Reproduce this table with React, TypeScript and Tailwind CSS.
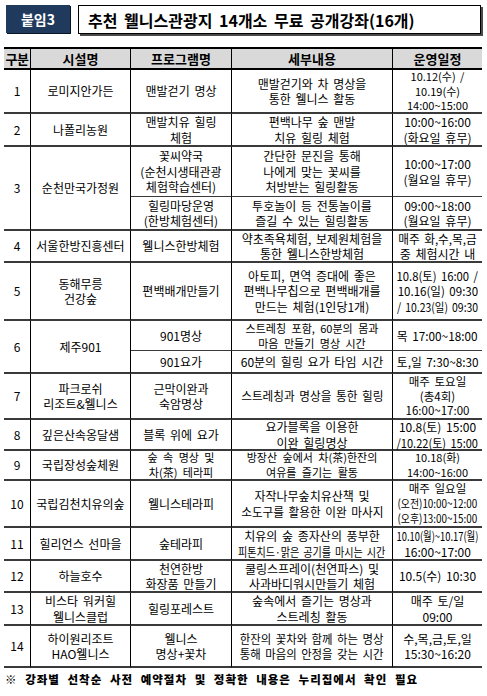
import React from "react";

type Ln = string | { t: string; s: string };

const mainB = "border-b-2 border-b-[#3a3a3a]";
const subB = "border-b border-b-[#3a3a3a]";

function Cell({
  lines,
  sub,
  last,
  span,
  lh,
  className,
}: {
  lines: Ln[];
  sub?: boolean;
  last?: boolean;
  span?: boolean;
  lh?: string;
  className?: string;
}) {
  return (
    <div
      className={`${span ? "row-span-2" : ""} ${sub ? subB : mainB} ${
        last ? "" : "border-r border-r-black"
      } flex flex-col items-center justify-center text-center ${lh ?? "text-[12px] leading-[15.5px]"} ${className ?? ""}`}
    >
      {lines.map((l, i) =>
        typeof l === "string" ? (
          <div key={i} className="whitespace-nowrap">
            {l}
          </div>
        ) : (
          <div key={i} className={`whitespace-nowrap ${l.s}`}>
            {l.t}
          </div>
        )
      )}
    </div>
  );
}

function Head({ t, last, className }: { t: string; last?: boolean; className?: string }) {
  return (
    <div
      className={`bg-[#d9d9d9] border-b-2 border-b-black ${
        last ? "" : "border-r border-r-black"
      } flex items-center justify-center font-bold text-[13px] ${className ?? ""}`}
    >
      {t}
    </div>
  );
}

const tight3 = "text-[11px] leading-[14.7px]";
const tight2 = "text-[11px] leading-[15px]";

export default function App() {
  return (
    <div className="w-[487px] h-[696px] bg-white text-black font-['Noto_Sans_CJK_KR','Noto_Sans',sans-serif] pt-[5px] overflow-hidden">
      {/* Title */}
      <div className="flex items-start pl-[6px] gap-[8px]">
        <div className="w-[64px] h-[28px] bg-[#1f3a5c] shadow-[1px_1px_0_#0b1522] flex items-center justify-center text-white font-bold text-[14px] leading-none">
          붙임3
        </div>
        <div className="w-[403px] h-[29px] border border-black shadow-[2px_2px_0_#4a4a4a] flex items-center pl-[9px] font-bold text-[16px] [word-spacing:3px] leading-none">
          추천 웰니스관광지 14개소 무료 공개강좌(16개)
        </div>
      </div>

      {/* Table */}
      <div className="ml-[4px] mt-[13px] w-[478px] border-t-2 border-t-black grid grid-cols-[27px_100px_101px_161px_89px] grid-rows-[21px_44px_33px_50px_34px_32px_58px_30px_23px_46px_31px_30px_47px_33px_32px_33px_42px] text-[12px] [word-spacing:2px]">
        <Head t="구분" className="tracking-[-0.5px] [word-spacing:0px]" />
        <Head t="시설명" />
        <Head t="프로그램명" />
        <Head t="세부내용" />
        <Head t="운영일정" last />

        {/* 1 */}
        <Cell lines={["1"]} />
        <Cell lines={["로미지안가든"]} />
        <Cell lines={["맨발걷기 명상"]} />
        <Cell lines={["맨발걷기와 차 명상을", "통한 웰니스 활동"]} />
        <Cell last lh={tight3} lines={["10.12(수) /", "10.19(수)", "14:00~15:00"]} />

        {/* 2 */}
        <Cell lines={["2"]} />
        <Cell lines={["나폴리농원"]} />
        <Cell lines={["맨발치유 힐링", "체험"]} />
        <Cell lines={["편백나무 숲 맨발", "치유 힐링 체험"]} />
        <Cell last lines={["10:00~16:00", "(화요일 휴무)"]} />

        {/* 3 */}
        <Cell span lines={["3"]} />
        <Cell span lines={["순천만국가정원"]} />
        <Cell sub lines={["꽃씨약국", "(순천시생태관광", "체험학습센터)"]} />
        <Cell sub lines={["간단한 문진을 통해", "나에게 맞는 꽃씨를", "처방받는 힐링활동"]} />
        <Cell sub last lines={["10:00~17:00", "(월요일 휴무)"]} />
        <Cell lines={["힐링마당운영", "(한방체험센터)"]} />
        <Cell lines={["투호놀이 등 전통놀이를", "즐길 수 있는 힐링활동"]} />
        <Cell last lines={["09:00~18:00", "(월요일 휴무)"]} />

        {/* 4 */}
        <Cell lines={["4"]} />
        <Cell lines={["서울한방진흥센터"]} className="[word-spacing:0px]" />
        <Cell lines={["웰니스한방체험"]} />
        <Cell lines={["약초족욕체험, 보제원체험을", "통한 웰니스한방체험"]} />
        <Cell last lines={[{ t: "매주 화,수,목,금", s: "scale-x-[0.97]" }, "중 체험시간 내"]} />

        {/* 5 */}
        <Cell lines={["5"]} />
        <Cell lines={["동해무릉", "건강숲"]} />
        <Cell lines={["편백배개만들기"]} />
        <Cell lines={["아토피, 면역 증대에 좋은", "편백나무칩으로 편백배개를", "만드는 체험(1인당1개)"]} />
        <Cell
          last
          lines={[
            { t: "10.8(토) 16:00 /", s: "scale-x-[0.94]" },
            { t: "10.16(일) 09:30", s: "scale-x-[0.96]" },
            { t: "/ 10.23(일) 09:30", s: "scale-x-[0.87]" },
          ]}
        />

        {/* 6 */}
        <Cell span lines={["6"]} />
        <Cell span lines={["제주901"]} />
        <Cell sub lines={["901명상"]} />
        <Cell
          sub
          lh={tight2}
          className="[word-spacing:3px]"
          lines={["스트레칭 포함, 60분의 몸과", "마음 만들기 명상 시간"]}
        />
        <Cell sub last lines={[{ t: "목 17:00~18:00", s: "scale-x-[0.98]" }]} />
        <Cell lines={["901요가"]} />
        <Cell lines={["60분의 힐링 요가 타임 시간"]} />
        <Cell last lines={[{ t: "토,일 7:30~8:30", s: "scale-x-[0.98]" }]} />

        {/* 7 */}
        <Cell lines={["7"]} />
        <Cell lines={["파크로쉬", "리조트&웰니스"]} />
        <Cell lines={["근막이완과", "숙암명상"]} />
        <Cell lines={[{ t: "스트레칭과 명상을 통한 힐링", s: "scale-x-[0.97]" }]} />
        <Cell last lh="text-[11.5px] leading-[14.8px]" lines={["매주 토요일", "(총4회)", "16:00~17:00"]} />

        {/* 8 */}
        <Cell lines={["8"]} />
        <Cell lines={["깊은산속옹달샘"]} />
        <Cell lines={["블록 위에 요가"]} />
        <Cell lines={["요가블록을 이용한", "이완 힐링명상"]} />
        <Cell last lines={["10.8(토) 15:00", { t: "/10.22(토) 15:00", s: "scale-x-[0.92]" }]} />

        {/* 9 */}
        <Cell lines={["9"]} />
        <Cell lines={["국립장성숲체원"]} />
        <Cell lh={tight2} className="[word-spacing:3px]" lines={["숲 속 명상 및", "차(茶) 테라피"]} />
        <Cell
          lh={tight2}
          className="[word-spacing:3px]"
          lines={["방장산 숲에서 차(茶)한잔의", "여유를 즐기는 활동"]}
        />
        <Cell last lh={tight2} lines={["10.18(화)", "14:00~16:00"]} />

        {/* 10 */}
        <Cell lines={["10"]} />
        <Cell lines={["국립김천치유의숲"]} className="[word-spacing:0px]" />
        <Cell lines={["웰니스테라피"]} />
        <Cell lines={["자작나무숲치유산책 및", { t: "소도구를 활용한 이완 마사지", s: "scale-x-[0.97]" }]} />
        <Cell
          last
          lh="text-[11.5px] leading-[15px]"
          lines={[
            "매주 일요일",
            { t: "(오전)10:00~12:00", s: "scale-x-[0.86]" },
            { t: "(오후)13:00~15:00", s: "scale-x-[0.86]" },
          ]}
        />

        {/* 11 */}
        <Cell lines={["11"]} />
        <Cell lines={["힐리언스 선마을"]} />
        <Cell lines={["숲테라피"]} />
        <Cell
          lines={[
            "치유의 숲 종자산의 풍부한",
            { t: "피톤치드·맑은 공기를 마시는 시간", s: "scale-x-[0.84]" },
          ]}
        />
        <Cell last lines={[{ t: "10.10(월)~10.17(월)", s: "scale-x-[0.78]" }, "16:00~17:00"]} />

        {/* 12 */}
        <Cell lines={["12"]} />
        <Cell lines={["하늘호수"]} />
        <Cell lines={["천연한방", "화장품 만들기"]} />
        <Cell lines={["쿨링스프레이(천연파스) 및", "사과바디워시만들기 체험"]} />
        <Cell last lines={["10.5(수) 10:30"]} />

        {/* 13 */}
        <Cell lines={["13"]} />
        <Cell lines={["비스타 워커힐", "웰니스클럽"]} />
        <Cell lines={["힐링포레스트"]} />
        <Cell lines={["숲속에서 즐기는 명상과", "스트레칭 활동"]} />
        <Cell last lines={["매주 토/일", "09:00"]} />

        {/* 14 */}
        <Cell lines={["14"]} />
        <Cell lines={["하이원리조트", "HAO웰니스"]} />
        <Cell lines={["웰니스", "명상+꽃차"]} />
        <Cell
          lines={[
            { t: "한잔의 꽃차와 함께 하는 명상", s: "scale-x-[0.95]" },
            { t: "통해 마음의 안정을 갖는 시간", s: "scale-x-[0.95]" },
          ]}
        />
        <Cell last lines={["수,목,금,토,일", "15:30~16:20"]} className="[word-spacing:0px]" />
      </div>

      {/* Footer */}
      <div className="ml-[5px] mt-[4px] text-[11.5px] font-black tracking-[1px] [word-spacing:4px] leading-[14px] whitespace-nowrap">
        ※ 강좌별 선착순 사전 예약절차 및 정확한 내용은 누리집에서 확인 필요
      </div>
    </div>
  );
}
